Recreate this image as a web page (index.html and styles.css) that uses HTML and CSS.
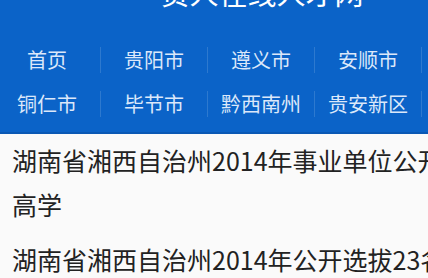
FILE: index.html
```html
<!DOCTYPE html>
<html lang="zh-CN">
<head>
  <meta charset="UTF-8">
  <meta name="viewport" content="width=device-width, initial-scale=1.0">
  <title>贵人在线人才网</title>
  <link rel="stylesheet" href="styles.css">
</head>
<body>
  <div id="page">
    <div id="header">
      <div id="site-title">贵人在线人才网</div>
      <div id="nav">
        <a class="nav-item" href="#">首页</a>
        <a class="nav-item" href="#">贵阳市</a>
        <a class="nav-item" href="#">遵义市</a>
        <a class="nav-item" href="#">安顺市</a>
        <a class="nav-item" href="#">铜仁市</a>
        <a class="nav-item" href="#">毕节市</a>
        <a class="nav-item" href="#">黔西南州</a>
        <a class="nav-item" href="#">贵安新区</a>
      </div>
    </div>

    <div id="news-list">
      <a class="news-item" href="#">湖南省湘西自治州2014年事业单位公开招聘高学</a>
      <a class="news-item" href="#">湖南省湘西自治州2014年公开选拔23名</a>
    </div>
  </div>
</body>
</html>
```

FILE: styles.css
```css
body, html {
  margin: 0;
  padding: 0;
  width: 100%;
  height: 100%;
  overflow: hidden;
  font-family: "Noto Sans CJK SC", "Noto Sans", sans-serif;
  background: #fafafa;
}

#page {
  margin-top: -30px;
}

#header {
  background-color: #0b63c8;
  padding-bottom: 6px;
  border-bottom: 2px solid #0a58b4;
}

#site-title {
  height: 44px;
  line-height: 44px;
  padding-left: 96px;
  text-align: center;
  font-size: 29px;
  color: #ffffff;
}

#nav {
  display: grid;
  grid-template-columns: repeat(4, 107px);
  margin: 24px 0 0 -6px;
  width: 440px;
}

.nav-item {
  display: block;
  margin: 9px 0;
  height: 26px;
  line-height: 26px;
  text-align: center;
  font-size: 20px;
  color: #dbe8fa;
  text-decoration: none;
  border-right: 1px solid rgba(255, 255, 255, 0.14);
}

#news-list {
  padding: 4px 12px 0 12px;
}

.news-item {
  display: block;
  width: 500px;
  margin-bottom: 11px;
  font-size: 25px;
  line-height: 44px;
  color: #222222;
  text-decoration: none;
  word-break: break-all;
}
```
